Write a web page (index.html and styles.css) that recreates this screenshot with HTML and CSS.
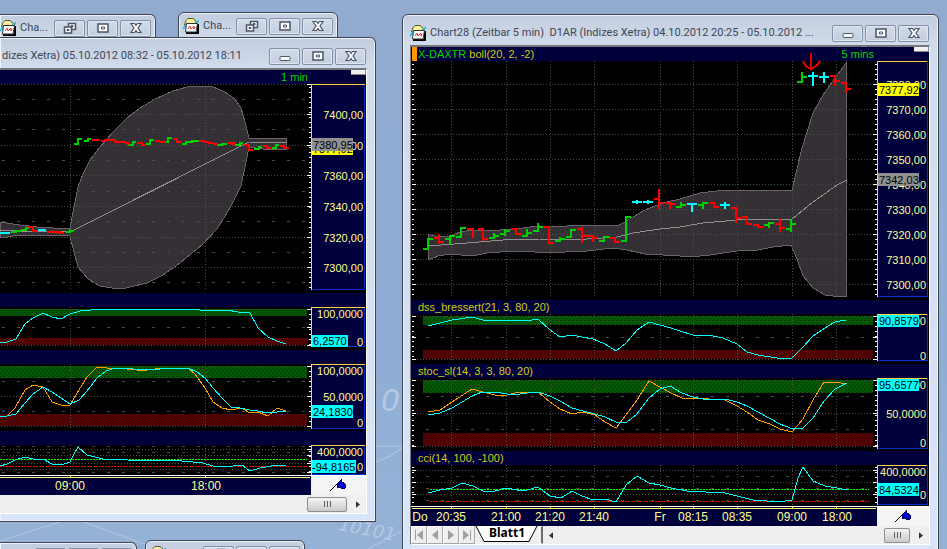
FILE: index.html
```html
<!DOCTYPE html>
<html lang="de">
<head>
  <meta charset="UTF-8">
  <meta name="viewport" content="width=device-width, initial-scale=1.0">
  <title>Chart28 (Zeitbar 5 min)</title>
  <link rel="stylesheet" href="styles.css">
</head>
<body>

  <!-- shared icons and patterns -->
  <svg class="defs" aria-hidden="true">
    <defs>
      <pattern id="zoneGreen" width="4" height="4" patternUnits="userSpaceOnUse">
        <rect width="4" height="4" fill="#005a00"/><path d="M0 0h1v1H0zM2 2h1v1H2z" fill="#002800"/>
      </pattern>
      <pattern id="zoneRed" width="4" height="2" patternUnits="userSpaceOnUse">
        <rect width="4" height="2" fill="#600000"/><path d="M0 0h1v1H0zM2 1h1v1H2z" fill="#380000"/>
      </pattern>
      <pattern id="bandFill" width="6" height="6" patternUnits="userSpaceOnUse">
        <rect width="6" height="6" fill="#343034"/><path d="M1 1h1v1H1z" fill="#1c3c1c"/><path d="M4 4h1v1H4z" fill="#24243c"/>
      </pattern>
    </defs>
    <symbol id="icon-chart" viewBox="0 0 16 16">
      <path d="M1.500 7 3 2.500 5 .500h5l3 2.500v3z" fill="#f6f09a" stroke="#55552a"/>
      <path d="M0 11 4 6M13 6l3-4" stroke="#18c8e8" stroke-width="2"/>
      <path d="M3 15h12V6" stroke="#000" stroke-width="2" fill="none"/>
      <path d="M3.500 5.500h11l-1.500 8.500H2.500z" fill="#fff" stroke="#333"/>
      <path d="m5 11 2-3 1 3 3-3v3l1-2" fill="none" stroke="#e02020" stroke-width=".9"/>
    </symbol>
    <symbol id="icon-restore" viewBox="0 0 14 12">
      <path d="M5.500 1.500h7v6h-7z" fill="#fff" stroke="#4c5468" stroke-width="1.500"/>
      <path d="M8 3.500h2v1.500H8z" fill="none" stroke="#4c5468"/>
      <path d="M1.500 5h7v6h-7z" fill="#fff" stroke="#4c5468" stroke-width="1.500"/>
      <path d="M4 7.500h2v1H4z" fill="none" stroke="#4c5468"/>
    </symbol>
    <symbol id="icon-max" viewBox="0 0 14 12">
      <path d="M2 2h10v8H2z" fill="#fff" stroke="#4c5468" stroke-width="1.500"/>
      <path d="M5.500 5h3v2h-3z" fill="none" stroke="#4c5468"/>
    </symbol>
    <symbol id="icon-min" viewBox="0 0 14 12">
      <rect x="2" y="6.500" width="10" height="4" rx="1" fill="#fff" stroke="#4c5468"/>
    </symbol>
    <symbol id="icon-close" viewBox="0 0 14 12">
      <path d="M2 1.500h3.500L7 3.500l1.500-2H12L9 6l3 4.500H8.500L7 8.500l-1.500 2H2L5 6z" fill="#fff" stroke="#4c5468" stroke-width="1.200"/>
    </symbol>
    <symbol id="icon-pin" viewBox="0 0 18 14">
      <path d="M1 13 13 1" stroke="#000" fill="none"/>
      <path d="M8 6 12 2l1 2 4 3-1 3-3 1-1-2-3 1z" fill="#0000d8" stroke="#000050"/>
    </symbol>
  </svg>

  <main class="desktop">
    <svg class="wallpaper" viewBox="0 0 947 549" preserveAspectRatio="xMinYMax slice" aria-hidden="true">
      <path d="M78 520 150 546M0 541 60 522M368 549l34-18M376 446h26M376 462q14-4 26-14" class="streak"/>
      <text x="381" y="411" class="digit big">0</text>
      <text x="338" y="530" class="digit" transform="rotate(11 338 530)">10101</text>
    </svg>

    <section class="window window-a">
      <header class="titlebar">
        <svg class="app-icon"><use href="#icon-chart"/></svg>
        <h2 class="title">Cha...</h2>
        <div class="controls">
          <button type="button" aria-label="Wiederherstellen"><svg><use href="#icon-restore"/></svg></button>
          <button type="button" aria-label="Maximieren"><svg><use href="#icon-max"/></svg></button>
          <button type="button" aria-label="Schließen"><svg><use href="#icon-close"/></svg></button>
        </div>
      </header>
    </section>

    <section class="window window-b">
      <header class="titlebar">
        <svg class="app-icon"><use href="#icon-chart"/></svg>
        <h2 class="title">Cha...</h2>
        <div class="controls">
          <button type="button" aria-label="Wiederherstellen"><svg><use href="#icon-restore"/></svg></button>
          <button type="button" aria-label="Maximieren"><svg><use href="#icon-max"/></svg></button>
          <button type="button" aria-label="Schließen"><svg><use href="#icon-close"/></svg></button>
        </div>
      </header>
    </section>

    <section class="window window-c">
      <header class="titlebar">
        <div class="controls">
          <button type="button" aria-label="Wiederherstellen"><svg><use href="#icon-restore"/></svg></button>
          <button type="button" aria-label="Maximieren"><svg><use href="#icon-max"/></svg></button>
          <button type="button" aria-label="Schließen"><svg><use href="#icon-close"/></svg></button>
        </div>
      </header>
    </section>

    <section class="window window-d">
      <header class="titlebar">
        <svg class="app-icon"><use href="#icon-chart"/></svg>
        <div class="controls">
          <button type="button" aria-label="Wiederherstellen"><svg><use href="#icon-restore"/></svg></button>
          <button type="button" aria-label="Maximieren"><svg><use href="#icon-max"/></svg></button>
          <button type="button" aria-label="Schließen"><svg><use href="#icon-close"/></svg></button>
        </div>
      </header>
    </section>

    <!-- 1 min chart -->
    <section class="window window-left">
      <header class="titlebar">
        <h2 class="title">dizes Xetra) 05.10.2012 08:32 - 05.10.2012 18:11</h2>
        <div class="controls">
          <button type="button" aria-label="Minimieren"><svg><use href="#icon-min"/></svg></button>
          <button type="button" aria-label="Maximieren"><svg><use href="#icon-max"/></svg></button>
          <button type="button" aria-label="Schließen"><svg><use href="#icon-close"/></svg></button>
        </div>
      </header>
      <div class="client">
        <div class="strip strip-top">
          <span class="interval">1 min</span>
          <span class="handle"></span>
        </div>
        <svg class="pane" viewBox="0 84 366 209">
          <path class="band" d="M0 222 20 225 37 227 68 229 70 228 74 207 78 187 83 174 90 160 100 147 113 132 127 118 140 108 155 99 173 91 187 87 200 86 213 87 225 92 235 99 241 108 245 122 249 138 286 138V149L263 149 249 147 245 167 241 186 230 208 217 229 203 244 180 263 163 275 147 283 126 288 112 288 100 286 88 279 78 267 74 252 70 237 68 235 20 235 0 238z"/>
          <path class="grid" d="M1 84.500H307M1 114.500H307M1 145.500H307M1 175.500H307M1 206.500H307M1 237.500H307M1 267.500H307M70.500 84V290M205.500 84V290"/>
          <path class="dash" d="M2 99.500H307M2 129.500H307M2 160.500H307M2 191.500H307M2 221.500H307M2 252.500H307M2 282.500H307"/>
          <path class="mean" d="M0 230 20 231 70 232 249 142 286 143"/>
          <path class="bar up" d="M11 232H16V231H21M21 230H26V228H29M66 232H70V229M70 231H73M74 144H78V139H82M84 141H88V139H91M128 145H133V142H136M146 144H150V140H154M163 142H168V138H172M182 144H186V142H193M191 141H199M217 145H222V143M222 144H227M235 145H240V143H243M254 149H259V147H262M272 148H276V145H279"/>
          <path class="bar down" d="M28 227H33V231H38M47 232H60V234M60 233H64M92 140H100M101 141H105V139M105 140H115V142H125M125 143H128V145M137 143H142V145H145M155 141H160M159 142H166M173 139H177V142H182M199 141H204V142H209M208 143H214M213 144H218M227 143H235M231 144H235M244 145H249V150H253M263 146H267V148H271M280 146H284V148H289"/>
          <path class="bar flat" d="M0 233H10M38 230H46"/>
          <path class="ticks-minor" d="M310 87V290"/>
          <path class="ticks-major" d="M307 84.500h4M307 114.500h4M307 145.500h4M307 175.500h4M307 206.500h4M307 237.500h4M307 267.500h4"/>
          <rect class="axis" x="311.500" y="84.500" width="53" height="205"/>
          <path class="axis-edge" d="M311.500 290V84.500H365"/>
          <g class="scale">
            <text x="363" y="119">7400,00</text>
            <text x="363" y="150">7380,00</text>
            <text x="363" y="180">7360,00</text>
            <text x="363" y="211">7340,00</text>
            <text x="363" y="242">7320,00</text>
            <text x="363" y="272">7300,00</text>
          </g>
          <rect class="tag yellow" x="312" y="142" width="41" height="13"/>
          <text class="tag-text" x="313" y="153">7377,92</text>
          <rect class="tag grey" x="312" y="138" width="41" height="13"/>
          <text class="tag-text" x="313" y="149">7380,95</text>
        </svg>
        <div class="strip"></div>
        <svg class="pane" viewBox="0 307 366 43">
          <rect class="zone-high" x="0" y="309" width="307" height="7"/>
          <rect class="zone-low" x="0" y="338" width="307" height="7"/>
          <path class="grid" d="M1 309.500H307M1 345.500H307M70.500 307V348M205.500 307V348"/>
          <path class="dash" d="M2 327.500H307"/>
          <path class="line" d="M0 342 7 342 16 339 25 324 33 318 43 313 52 317 61 319 70 314 80 311 102 309 182 309 200 310 227 310 238 312 247 312 250 313 258 328 268 337 277 341 286 344"/>
          <path class="ticks-minor" d="M310 309V346"/>
          <path class="ticks-major" d="M307 309.500h4M307 327.500h4M307 345.500h4"/>
          <rect class="axis" x="311.500" y="307.500" width="53" height="39"/>
          <path class="axis-edge" d="M311.500 347V307.500H365"/>
          <g class="scale">
            <text x="363" y="318">100,0000</text>
            <text x="363" y="346">0</text>
          </g>
          <rect class="tag cyan" x="312" y="335" width="36" height="12"/>
          <text class="tag-text" x="313" y="345">6,2570</text>
        </svg>
        <div class="strip"></div>
        <svg class="pane" viewBox="0 364 366 67">
          <rect class="zone-high" x="0" y="366" width="307" height="12"/>
          <rect class="zone-low" x="0" y="414" width="307" height="12"/>
          <path class="grid" d="M1 366.500H307M1 396.500H307M1 426.500H307M70.500 364V429M205.500 364V429"/>
          <path class="dash" d="M2 381.500H307M2 411.500H307"/>
          <path class="line signal" d="M0 417 7 416 15 408 25 390 33 385 43 387 52 402 61 405 70 405 79 390 87 377 97 367 107 368 127 369 137 370 147 370 163 368 188 368 195 374 205 388 213 402 222 408 231 410 242 408 248 412 258 412 268 416 277 408 286 411"/>
          <path class="line" d="M0 417 7 416 16 414 25 403 33 394 43 387 52 392 70 404 79 400 87 391 97 378 106 371 115 368 127 368 133 369 160 369 167 368 188 368 197 372 205 378 213 388 222 398 231 407 240 408 250 410 258 411 267 413 277 412 286 411"/>
          <path class="ticks-minor" d="M310 366V427"/>
          <path class="ticks-major" d="M307 366.500h4M307 396.500h4M307 426.500h4"/>
          <rect class="axis" x="311.500" y="364.500" width="53" height="64"/>
          <path class="axis-edge" d="M311.500 429V364.500H365"/>
          <g class="scale">
            <text x="363" y="375">100,0000</text>
            <text x="363" y="401">50,0000</text>
            <text x="363" y="427">0</text>
          </g>
          <rect class="tag cyan" x="312" y="405" width="41" height="13"/>
          <text class="tag-text" x="313" y="416">24,1830</text>
        </svg>
        <div class="strip"></div>
        <svg class="pane" viewBox="0 445 366 30">
          <path class="grid" d="M1 449.500H307M1 455.500H307M1 463.500H307M1 469.500H307M70.500 445V474M205.500 445V474"/>
          <path class="dash" d="M2 446.500H307M2 452.500H307M2 472.500H307"/>
          <path class="level-up" d="M0 459.500H307"/>
          <path class="level-down" d="M0 466.500H307"/>
          <path class="line" d="M0 466 7 464 15 460 25 457 33 459 43 459 52 464 61 465 70 462 74 454 78 447 87 455 103 459 127 460 182 461 203 463 213 466 233 466 242 465 250 471 260 468 277 465 286 466"/>
          <path class="ticks-minor" d="M310 446V473"/>
          <path class="ticks-major" d="M307 449.500h4M307 455.500h4M307 463.500h4M307 472.500h4"/>
          <rect class="axis" x="311.500" y="445.500" width="53" height="29"/>
          <path class="axis-edge" d="M311.500 475V445.500H365"/>
          <g class="scale">
            <text x="363" y="456">400,0000</text>
            <text x="363" y="471">0</text>
          </g>
          <rect class="tag cyan" x="312" y="460" width="44" height="13"/>
          <text class="tag-text" x="312" y="471">-94,8165</text>
        </svg>
        <svg class="pane" viewBox="0 475 366 20">
          <rect class="time-bg" x="0" y="475" width="311" height="20"/>
          <path class="time-white" d="M0 475.500H366"/>
          <path class="time-line" d="M0 477.500H310M70.500 475V478M205.500 475V478"/>
          <g class="times">
            <text x="70" y="490">09:00</text>
            <text x="206" y="490">18:00</text>
          </g>
          <rect class="corner" x="311" y="476" width="55" height="19"/>
          <use href="#icon-pin" x="329" y="478" width="18" height="14"/>
        </svg>
        <div class="sheetbar">
          <div class="track">
            <button type="button" class="thumb wide" aria-label="Bildlauf"></button>
            <button type="button" class="arrow" aria-label="Rechts"><svg viewBox="0 0 5 8"><path d="m0 0 5 4-5 4z"/></svg></button>
          </div>
        </div>
      </div>
    </section>

    <!-- 5 min chart -->
    <section class="window window-right">
      <header class="titlebar">
        <svg class="app-icon"><use href="#icon-chart"/></svg>
        <h1 class="title">Chart28 (Zeitbar 5 min)&nbsp; D1AR (Indizes Xetra) 04.10.2012 20:25 - 05.10.2012 ...</h1>
        <div class="controls">
          <button type="button" aria-label="Minimieren"><svg><use href="#icon-min"/></svg></button>
          <button type="button" aria-label="Maximieren"><svg><use href="#icon-max"/></svg></button>
          <button type="button" aria-label="Schließen"><svg><use href="#icon-close"/></svg></button>
        </div>
      </header>
      <div class="client">
        <div class="strip strip-top">
          <span class="marker"></span>
          <span class="symbol">X-DAXTR</span>
          <span class="study">boll(20, 2, -2)</span>
          <span class="interval">5 mins</span>
          <span class="handle"></span>
        </div>
        <svg class="pane overlay" viewBox="411 61 518 239">
          <path class="band" d="M428 234 438 237 450 236 460 232 472 230 500 230 523 228 537 226 567 226 587 225 617 226 623 223 633 217 645 210 655 206 667 202 680 199 700 193 725 190 763 190 792 190 802 148 813 113 823 95 835 78 846 63V296L833 296 825 295 813 288 803 276 797 259 791 245 773 247 758 250 737 251 710 255 690 257 680 256 663 255 645 254 627 250 613 248 587 251 543 253 527 251 500 252 487 253 472 256 450 254 438 256 428 260z"/>
          <path class="grid" d="M417 84.500H873M417 109.500H873M417 134.500H873M417 159.500H873M417 184.500H873M417 209.500H873M417 234.500H873M417 259.500H873M417 284.500H873M451.500 61V298M506.500 61V298M550.500 61V298M594.500 61V298M660.500 61V298M693.500 61V298M737.500 61V298M792.500 61V298M836.500 61V298"/>
          <path class="mean" d="M428 246 467 243 503 240 540 239 587 239 617 237 633 233 660 229 680 227 703 223 737 220 767 219 792 219 813 202 837 185 847 180"/>
          <path class="bar up" d="M423 249H428V239H433M445 239H450M450 235V245M450 236H455M456 237H461V228H466M489 238H494M494 233V239M494 236H499M500 234H505M505 229V236M505 231H510M522 236H527M527 229V237M527 233H532M533 231H538V223M538 227H543M555 241H560V237M560 239H565M566 237H571V229M571 230H576M599 241H604V237H609M621 241H626V217H631M676 207H681M681 202V208M681 205H686M698 205H703M703 202V209M703 203H708M764 225H769M769 222V228M769 223H774M786 229H791M791 219V232M791 224H796M797 82H802M802 72V83M802 77H807"/>
          <path class="bar down" d="M434 238H439M439 234V244M439 242H444M467 229H473V238M478 229H483V241M483 239H488M511 229H516V234H521M544 227H549V243H554M577 229H582M582 227V243M582 236H587M588 236H593V242M593 238H598M610 238H615V243M615 242H620M654 199H659M659 189V209M659 203H664M665 203H670M670 202V209M670 204H675M709 203H714V208M714 207H719M731 208H736V223M736 218H741M742 217H747V224H752M753 225H758V228M758 227H763M775 224H780M780 219V232M780 228H785M830 76H835V86M835 81H840M841 83H846V93M846 89H851"/>
          <path class="bar flat" d="M632 202H642M637 200V204M643 202H653M648 200V204M687 204H697M692 204V212M720 205H730M725 202V209M808 76H818M813 72V86M819 77H829M824 72V83"/>
          <path class="arrow-down" d="M811 53V68M803 61Q805 67 811 69 817 66 820 61"/>
          <path class="ticks-minor" d="M412.500 64V299M876 64V299"/>
          <path class="ticks-major" d="M412 84.500h4M412 109.500h4M412 134.500h4M412 159.500h4M412 184.500h4M412 209.500h4M412 234.500h4M412 259.500h4M412 284.500h4M873 84.500h4M873 109.500h4M873 134.500h4M873 159.500h4M873 184.500h4M873 209.500h4M873 234.500h4M873 259.500h4M873 284.500h4"/>
          <rect class="axis" x="877.500" y="61.500" width="50" height="235"/>
          <path class="axis-edge" d="M877.500 297V61.500H927"/>
          <g class="scale">
            <text x="926" y="89">7380,00</text>
            <text x="926" y="114">7370,00</text>
            <text x="926" y="139">7360,00</text>
            <text x="926" y="164">7350,00</text>
            <text x="926" y="189">7340,00</text>
            <text x="926" y="214">7330,00</text>
            <text x="926" y="239">7320,00</text>
            <text x="926" y="264">7310,00</text>
            <text x="926" y="289">7300,00</text>
          </g>
          <rect class="tag yellow" x="878" y="83" width="41" height="13"/>
          <text class="tag-text" x="879" y="94">7377,92</text>
          <rect class="tag grey" x="878" y="173" width="41" height="13"/>
          <text class="tag-text" x="879" y="184">7342,03</text>
        </svg>
        <div class="strip"><span class="study">dss_bressert(21, 3, 80, 20)</span></div>
        <svg class="pane" viewBox="411 314 518 50">
          <rect class="zone-high" x="423" y="316" width="450" height="9"/>
          <rect class="zone-low" x="423" y="350" width="450" height="9"/>
          <path class="grid" d="M417 316.500H873M417 359.500H873M451.500 314V361M506.500 314V361M550.500 314V361M594.500 314V361M660.500 314V361M693.500 314V361M737.500 314V361M792.500 314V361M836.500 314V361"/>
          <path class="dash" d="M426 337.500H873"/>
          <path class="line" d="M428 326 440 323 452 320 472 317 483 320 495 321 503 320 515 320 527 321 538 319 550 330 560 337 572 335 582 337 593 339 605 344 616 351 626 343 637 330 649 322 660 325 671 328 680 331 693 335 713 336 723 338 737 344 747 352 758 355 777 358 792 358 803 347 813 336 825 328 835 322 846 320"/>
          <path class="ticks-minor" d="M412.500 316V361M876 316V361"/>
          <path class="ticks-major" d="M412 316.500h4M412 337.500h4M412 359.500h4M873 316.500h4M873 337.500h4M873 359.500h4"/>
          <rect class="axis" x="877.500" y="314.500" width="50" height="46"/>
          <path class="axis-edge" d="M877.500 361V314.500H927"/>
          <g class="scale">
            <text x="926" y="325">100,0000</text>
            <text x="926" y="360">0</text>
          </g>
          <rect class="tag cyan" x="878" y="315" width="41" height="12"/>
          <text class="tag-text" x="879" y="325">90,8579</text>
        </svg>
        <div class="strip"><span class="study">stoc_sl(14, 3, 3, 80, 20)</span></div>
        <svg class="pane" viewBox="411 378 518 73">
          <rect class="zone-high" x="423" y="380" width="450" height="13"/>
          <rect class="zone-low" x="423" y="433" width="450" height="13"/>
          <path class="grid" d="M417 380.500H873M417 413.500H873M417 446.500H873M451.500 378V449M506.500 378V449M550.500 378V449M594.500 378V449M660.500 378V449M693.500 378V449M737.500 378V449M792.500 378V449M836.500 378V449"/>
          <path class="dash" d="M426 396.500H873M426 429.500H873"/>
          <path class="line signal" d="M428 412 440 410 452 402 472 389 483 392 495 395 507 395 515 393 527 392 538 392 550 402 560 409 572 414 583 412 595 415 605 422 616 428 626 415 637 400 649 381 660 387 671 393 682 398 693 398 725 400 737 406 747 412 758 420 770 424 780 429 792 432 803 419 813 400 824 382 835 382 847 384"/>
          <path class="line" d="M428 415 440 413 452 408 472 396 482 392 495 392 507 394 520 394 527 393 538 392 550 396 560 401 572 408 583 411 595 414 605 417 616 422 627 422 637 414 649 398 660 389 670 386 682 393 693 397 703 399 725 399 737 402 747 406 758 412 780 424 793 429 803 428 813 418 824 401 835 389 847 383"/>
          <path class="ticks-minor" d="M412.500 380V448M876 380V448"/>
          <path class="ticks-major" d="M412 380.500h4M412 413.500h4M412 446.500h4M873 380.500h4M873 413.500h4M873 446.500h4"/>
          <rect class="axis" x="877.500" y="378.500" width="50" height="70"/>
          <path class="axis-edge" d="M877.500 449V378.500H927"/>
          <g class="scale">
            <text x="926" y="389">100,0000</text>
            <text x="926" y="418">50,0000</text>
            <text x="926" y="447">0</text>
          </g>
          <rect class="tag cyan" x="878" y="379" width="41" height="12"/>
          <text class="tag-text" x="879" y="389">95,6577</text>
        </svg>
        <div class="strip"><span class="study">cci(14, 100, -100)</span></div>
        <svg class="pane" viewBox="411 465 518 41">
          <path class="grid" d="M417 470.500H873M417 482.500H873M417 494.500H873M451.500 465V505M506.500 465V505M550.500 465V505M594.500 465V505M660.500 465V505M693.500 465V505M737.500 465V505M792.500 465V505M836.500 465V505"/>
          <path class="dash" d="M426 476.500H873M426 488.500H873M426 500.500H873"/>
          <path class="level-up" d="M430 489.500H869"/>
          <path class="level-down" d="M430 501.500H869"/>
          <path class="line" d="M428 493 440 490 452 488 462 483 473 486 483 491 495 491 506 488 517 490 527 490 538 487 550 496 561 498 572 491 582 496 593 500 605 499 616 502 626 485 637 476 649 483 660 485 671 488 687 491 725 493 737 496 753 500 767 501 785 501 792 500 798 478 803 467 813 481 825 486 837 488 847 490"/>
          <path class="ticks-minor" d="M412.500 467V505M876 467V505"/>
          <path class="ticks-major" d="M412 470.500h4M412 482.500h4M412 494.500h4M873 470.500h4M873 482.500h4M873 494.500h4"/>
          <rect class="axis" x="877.500" y="465.500" width="50" height="39"/>
          <path class="axis-edge" d="M877.500 505V465.500H927"/>
          <g class="scale">
            <text x="926" y="476">400,0000</text>
            <text x="926" y="499">0</text>
          </g>
          <rect class="tag cyan" x="878" y="483" width="41" height="13"/>
          <text class="tag-text" x="879" y="494">84,5324</text>
        </svg>
        <svg class="pane" viewBox="411 506 518 20">
          <rect class="time-bg" x="411" y="506" width="466" height="20"/>
          <path class="time-white" d="M411 506.500H929"/>
          <path class="time-line" d="M412 508.500H876M451.500 506V509M506.500 506V509M550.500 506V509M594.500 506V509M660.500 506V509M693.500 506V509M737.500 506V509M792.500 506V509M836.500 506V509"/>
          <g class="times">
            <text x="420" y="521">Do</text>
            <text x="451" y="521">20:35</text>
            <text x="506" y="521">21:00</text>
            <text x="550" y="521">21:20</text>
            <text x="594" y="521">21:40</text>
            <text x="660" y="521">Fr</text>
            <text x="693" y="521">08:15</text>
            <text x="737" y="521">08:35</text>
            <text x="792" y="521">09:00</text>
            <text x="837" y="521">18:00</text>
          </g>
          <rect class="corner" x="877" y="507" width="52" height="19"/>
          <use href="#icon-pin" x="894" y="509" width="18" height="14"/>
        </svg>
        <div class="sheetbar">
          <nav class="sheet-nav">
            <button type="button" aria-label="Erstes Blatt"><svg viewBox="0 0 12 12"><path d="M2 1h1v10H2zM10 1v10L4 6z"/></svg></button>
            <button type="button" aria-label="Voriges Blatt"><svg viewBox="0 0 12 12"><path d="M9 1v10L3 6z"/></svg></button>
            <button type="button" aria-label="Nächstes Blatt"><svg viewBox="0 0 12 12"><path d="M3 1v10l6-5z"/></svg></button>
            <button type="button" aria-label="Letztes Blatt"><svg viewBox="0 0 12 12"><path d="M2 1v10l6-5zM9 1h1v10H9z"/></svg></button>
          </nav>
          <button type="button" class="tab">
            <svg viewBox="0 0 64 18" aria-hidden="true"><path d="M1 0 9 15.500H54L62 0"/></svg>
            <span>Blatt1</span>
          </button>
          <span class="splitter"></span>
          <div class="track">
            <button type="button" class="arrow" aria-label="Links"><svg viewBox="0 0 5 8"><path d="M5 0 0 4l5 4z"/></svg></button>
            <button type="button" class="thumb" aria-label="Bildlauf"></button>
            <button type="button" class="arrow" aria-label="Rechts"><svg viewBox="0 0 5 8"><path d="m0 0 5 4-5 4z"/></svg></button>
          </div>
        </div>
      </div>
    </section>
  </main>

</body>
</html>
```
FILE: styles.css
```css
* {
  box-sizing: border-box;
}

body {
  margin: 0;
  font-family: "Liberation Sans", Arial, sans-serif;
  font-size: 11px;
}

button {
  padding: 0;
  border: none;
  background: none;
  font: inherit;
}

.defs {
  position: absolute;
  width: 0;
  height: 0;
}

/* desktop */
.desktop {
  position: relative;
  height: 100vh;
  overflow: hidden;
  background: linear-gradient(#92abd0, #8fadd4 60%, #95b1d6);
}

.wallpaper {
  display: block;
  width: 100%;
  height: 100%;
}

.streak {
  fill: none;
  stroke: #b4c8e2;
  stroke-width: 1;
}

.digit {
  fill: #b4c8e2;
  font-family: "DejaVu Sans", sans-serif;
  font-size: 18px;
  font-style: italic;
}

.digit.big {
  font-size: 30px;
}

/* windows */
.window {
  position: absolute;
  display: flex;
  flex-direction: column;
  border: 1px solid #3c4454;
  border-radius: 6px 6px 0 0;
  background: linear-gradient(#c3cddf, #d0dbeb 30px, #d9e5f8);
  box-shadow: inset 0 0 0 1px #eef4fc;
}

.window-a {
  top: 14px;
  left: 0;
  width: 156px;
  height: 60px;
  padding: 0 4px 0 0;
  border-left: none;
  border-top-left-radius: 0;
}

.window-b {
  top: 12px;
  left: 178px;
  width: 160px;
  height: 60px;
  padding: 0 4px;
}

.window-c {
  top: 542px;
  left: 0;
  width: 137px;
  height: 60px;
  padding: 0 4px 0 0;
  border-left: none;
  border-top-left-radius: 0;
}

.window-d {
  top: 540px;
  left: 145px;
  width: 160px;
  height: 60px;
  padding: 0 4px;
}

.window-left {
  top: 37px;
  left: 0;
  right: 571px;
  padding: 0 8px 7px 0;
  border-left: none;
  border-top-left-radius: 0;
}

.window-right {
  top: 14px;
  left: 402px;
  right: 8px;
  padding: 0 8px 8px 7px;
}

.titlebar {
  display: flex;
  align-items: center;
  gap: 4px;
  height: 30px;
  padding: 6px 1px 0 0;
}

.window-a .titlebar,
.window-b .titlebar,
.window-c .titlebar,
.window-d .titlebar {
  height: 24px;
  padding: 2px 0 0;
}

.window-left .titlebar {
  padding-left: 2px;
}

.app-icon {
  flex: none;
  width: 16px;
  height: 16px;
}

.title {
  flex: 1;
  min-width: 0;
  margin: 0;
  overflow: hidden;
  color: #3e4656;
  font-family: Roboto, sans-serif;
  font-size: 11px;
  font-weight: normal;
  line-height: 18px;
  white-space: nowrap;
}

.controls {
  display: flex;
  flex: none;
  gap: 2px;
  margin-left: auto;
}

.controls button {
  display: flex;
  align-items: center;
  justify-content: center;
  width: 31px;
  height: 17px;
  border: 1px solid #8490a8;
  border-radius: 2px;
  background: linear-gradient(#d3dbe8, #c3cede);
  box-shadow: inset 0 0 0 1px #dde6f2;
}

.controls svg {
  width: 14px;
  height: 12px;
}

.client {
  display: flex;
  flex-direction: column;
  border: 1px solid #fff;
  border-top: 2px solid #74767c;
  border-left: 1px solid #74767c;
  background: #000;
}

.window-left .client {
  border-left: none;
}

/* title strips of the panes */
.strip {
  display: flex;
  align-items: center;
  height: 14px;
  padding-left: 7px;
  background: #00003c;
  line-height: 14px;
  white-space: nowrap;
}

.strip-top {
  padding-left: 1px;
}

.marker {
  width: 5px;
  height: 14px;
  margin-right: 1px;
  background: #ff9800;
}

.symbol {
  margin-right: 3px;
  color: #00d800;
}

.study {
  color: #d2cc10;
}

.interval {
  margin-left: auto;
  margin-right: 40px;
  color: #00d800;
}

.window-left .interval {
  margin-right: 43px;
}

.handle {
  width: 15px;
  height: 5px;
  align-self: flex-start;
  border-right: 1px solid #888;
  border-bottom: 1px solid #888;
  background: #f0f0f0;
}

/* charts */
.pane {
  display: block;
  width: 100%;
  height: auto;
  shape-rendering: crispEdges;
}

.pane.overlay {
  position: relative;
  overflow: visible;
}

.pane path {
  fill: none;
}

.pane .band {
  fill: url(#bandFill);
  stroke: #6c626c;
}

.grid {
  stroke: #465046;
  stroke-dasharray: 1 2;
}

.dash {
  stroke: #465046;
  stroke-dasharray: 3 12;
}

.mean {
  stroke: #909090;
}

.bar {
  stroke-width: 2;
}

.up {
  stroke: #00d000;
}

.down {
  stroke: #ff0000;
}

.flat {
  stroke: #00ffff;
}

.arrow-down {
  stroke: #e60000;
  stroke-width: 2;
}

.line {
  stroke: #00ffff;
}

.line.signal {
  stroke: #ff9c00;
}

.level-up {
  stroke: #00ff00;
  stroke-dasharray: 2 1;
}

.level-down {
  stroke: #ff0000;
  stroke-dasharray: 2 1;
}

.zone-high {
  fill: url(#zoneGreen);
}

.zone-low {
  fill: url(#zoneRed);
}

.ticks-minor {
  stroke: #fff;
  stroke-width: 2;
  stroke-dasharray: 1 4;
}

.ticks-major {
  stroke: #fff;
}

.axis {
  fill: #00003c;
  stroke: #0030d0;
}

.axis-edge {
  stroke: #ffd040;
}

.scale text {
  fill: #ffff90;
  text-anchor: end;
}

.tag.yellow {
  fill: #ffff00;
}

.tag.grey {
  fill: #909090;
}

.tag.cyan {
  fill: #00ffff;
}

.tag-text {
  fill: #000;
}

.time-bg {
  fill: #00003c;
}

.time-white {
  stroke: #fff;
}

.time-line {
  stroke: #ffff60;
}

.times text {
  fill: #ffff90;
  font-size: 12px;
  text-anchor: middle;
}

.corner {
  fill: #f4f4f4;
}

/* sheet tabs and scroll bar */
.sheetbar {
  display: flex;
  height: 18px;
  background: #efeff0;
}

.sheet-nav {
  display: flex;
}

.sheet-nav button {
  display: flex;
  align-items: center;
  justify-content: center;
  width: 16px;
  border: 1px solid #fff;
  border-right-color: #a8a8a8;
  border-bottom-color: #a8a8a8;
}

.sheet-nav svg {
  width: 12px;
  height: 12px;
  fill: #a0a0a0;
}

.tab {
  display: grid;
  width: 64px;
}

.tab > * {
  grid-area: 1 / 1;
}

.tab svg {
  width: 64px;
  height: 18px;
  fill: #fff;
  stroke: #000;
}

.tab span {
  font-family: "Noto Sans", sans-serif;
  font-size: 12px;
  font-weight: bold;
  line-height: 14px;
}

.splitter {
  width: 4px;
  border: 1px solid #fff;
  border-right: 2px solid #707070;
  background: #e4e4e4;
}

.track {
  display: flex;
  flex: 1;
  align-items: center;
  padding: 0 6px;
}

.arrow svg {
  display: block;
  width: 4px;
  height: 7px;
  fill: #303030;
}

.thumb {
  width: 26px;
  height: 15px;
  margin-left: auto;
  margin-right: 9px;
  border: 1px solid #909090;
  border-radius: 2px;
  background:
    repeating-linear-gradient(90deg, #606060 0 1px, transparent 1px 3px) center / 7px 6px no-repeat,
    linear-gradient(#f4f4f4, #e0e0e0 50%, #cacaca);
}

.thumb.wide {
  width: 40px;
}
```
